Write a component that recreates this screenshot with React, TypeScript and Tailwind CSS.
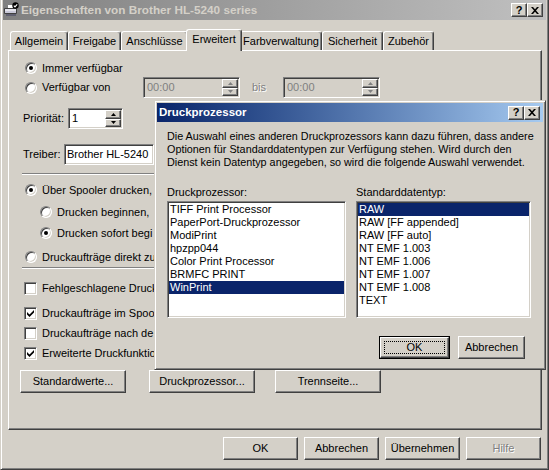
import React from 'react';

const raised =
  'border border-t-white border-l-white border-r-[#404040] border-b-[#404040] shadow-[inset_-1px_-1px_0_#808080]';
const sunken =
  'border border-t-[#808080] border-l-[#808080] border-r-white border-b-white shadow-[inset_1px_1px_0_#404040,inset_-1px_-1px_0_#d4d0c8]';
const frame =
  'border border-t-[#d4d0c8] border-l-[#d4d0c8] border-r-[#404040] border-b-[#404040] shadow-[inset_1px_1px_0_white,inset_-1px_-1px_0_#808080]';
const greyText = 'text-[#808080] [text-shadow:1px_1px_0_white]';

function PrinterIcon() {
  return (
    <svg width="16" height="16" viewBox="0 0 16 16" className="shrink-0">
      <path d="M4.5 2.5h6v4h-6z" fill="#fff" stroke="#808080" />
      <path d="M1.5 6.5h12v5h-12z" fill="#c8c8d8" stroke="#404040" />
      <path d="M2 8h11" stroke="#fff" />
      <path d="M3 12h10v2H3z" fill="#606070" />
      <circle cx="12.5" cy="3.5" r="3.2" fill="#000" />
      <path d="M10.8 3.6l1.2 1.3 2.2-2.6" stroke="#fff" strokeWidth="1.1" fill="none" />
    </svg>
  );
}

function CaptionButtons() {
  return (
    <div className="flex">
      <div className={`w-[16px] h-[14px] bg-[#d4d0c8] ${raised} flex items-center justify-center font-bold text-[11px] leading-none text-black`}>
        ?
      </div>
      <div className={`w-[16px] h-[14px] bg-[#d4d0c8] ${raised} flex items-center justify-center`}>
        <svg width="8" height="7" viewBox="0 0 8 7">
          <path d="M0 0h2l2 2.3L6 0h2L5 3.5 8 7H6L4 4.7 2 7H0l3-3.5z" fill="#000" />
        </svg>
      </div>
    </div>
  );
}

function Radio({ checked }: { checked?: boolean }) {
  return (
    <span className="w-[12px] h-[12px] shrink-0 rounded-full bg-white border border-t-[#808080] border-l-[#808080] border-r-white border-b-white shadow-[inset_1px_1px_0_#404040,inset_-1px_-1px_0_#d4d0c8] flex items-center justify-center">
      {checked && <span className="w-[4px] h-[4px] rounded-full bg-black" />}
    </span>
  );
}

function Check({ checked }: { checked?: boolean }) {
  return (
    <span className={`w-[13px] h-[13px] shrink-0 bg-white ${sunken} flex items-center justify-center`}>
      {checked && (
        <svg width="7" height="7" viewBox="0 0 7 7">
          <path d="M0 2l2.5 2.5L7 0v2.5L2.5 7 0 4.5z" fill="#000" />
        </svg>
      )}
    </span>
  );
}

function Arrow({ up, color }: { up?: boolean; color: string }) {
  return (
    <svg width="5" height="3" viewBox="0 0 5 3">
      <path d={up ? 'M2.5 0L5 3H0z' : 'M0 0h5L2.5 3z'} fill={color} />
    </svg>
  );
}

function SpinField({ value, w, disabled }: { value: string; w: string; disabled?: boolean }) {
  const color = disabled ? '#808080' : '#000';
  return (
    <div className={`${w} h-[21px] shrink-0 ${sunken} ${disabled ? 'bg-[#d4d0c8]' : 'bg-white'} flex p-[1px]`}>
      <div className={`flex-1 flex items-center pl-[2px] ${disabled ? 'text-[#808080]' : ''}`}>{value}</div>
      <div className="w-[16px] flex flex-col">
        <div className={`flex-1 bg-[#d4d0c8] ${raised} flex items-center justify-center`}>
          <Arrow up color={color} />
        </div>
        <div className={`flex-1 bg-[#d4d0c8] ${raised} flex items-center justify-center`}>
          <Arrow color={color} />
        </div>
      </div>
    </div>
  );
}

function Button({ label, w, disabled }: { label: string; w: string; disabled?: boolean }) {
  return (
    <div className={`${w} h-[23px] bg-[#d4d0c8] ${raised} flex items-center justify-center ${disabled ? greyText : ''}`}>
      {label}
    </div>
  );
}

function Separator() {
  return <div className="ml-[13px] w-[505px] h-[2px] border-t border-t-[#808080] border-b border-b-white" />;
}

const tabs = [
  { label: 'Allgemein', w: 'w-[58px]' },
  { label: 'Freigabe', w: 'w-[53px]' },
  { label: 'Anschlüsse', w: 'w-[67px]' },
  { label: 'Erweitert', w: 'w-[56px]', active: true },
  { label: 'Farbverwaltung', w: 'w-[82px]' },
  { label: 'Sicherheit', w: 'w-[61px]' },
  { label: 'Zubehör', w: 'w-[51px]' },
];

// only the part left of the Druckprozessor dialog is visible
const spoolOptions = [
  { label: 'Über Spooler drucken,', indent: 'pl-[16px]', mt: 'mt-[7px]', checked: true },
  { label: 'Drucken beginnen,', indent: 'pl-[31px]', mt: 'mt-[6px]' },
  { label: 'Drucken sofort begi', indent: 'pl-[31px]', mt: 'mt-[5px]', checked: true },
  { label: 'Druckaufträge direkt zu', indent: 'pl-[16px]', mt: 'mt-[8px]' },
];
const checkOptions = [
  { label: 'Fehlgeschlagene Druck', mt: 'mt-[11px]' },
  { label: 'Druckaufträge im Spool', mt: 'mt-[9px]', checked: true },
  { label: 'Druckaufträge nach de', mt: 'mt-[4px]' },
  { label: 'Erweiterte Druckfunktio', mt: 'mt-[4px]', checked: true },
];

const processors = [
  'TIFF Print Processor',
  'PaperPort-Druckprozessor',
  'ModiPrint',
  'hpzpp044',
  'Color Print Processor',
  'BRMFC PRINT',
  'WinPrint',
];
const dataTypes = [
  'RAW',
  'RAW [FF appended]',
  'RAW [FF auto]',
  'NT EMF 1.003',
  'NT EMF 1.006',
  'NT EMF 1.007',
  'NT EMF 1.008',
  'TEXT',
];

function ListBox({ items, selected, w }: { items: string[]; selected: string; w: string }) {
  return (
    <div className={`${w} h-[117px] bg-white ${sunken} p-[1px] overflow-hidden`}>
      {items.map(item => (
        <div
          key={item}
          className={`h-[13px] leading-[13px] pl-[1px] whitespace-nowrap ${item === selected ? 'bg-[#0a246a] text-white' : ''}`}
        >
          {item}
        </div>
      ))}
    </div>
  );
}

function ProcessorDialog() {
  return (
    <div className={`absolute left-[153px] top-[100px] w-[392px] h-[270px] bg-[#d4d0c8] ${frame} p-[2px] flex flex-col`}>
      <div className="h-[19px] bg-linear-to-r from-[#0a246a] to-[#a6caf0] flex items-center justify-between pl-[2px] pr-[3px]">
        <span className="text-white font-bold text-[11.5px]">Druckprozessor</span>
        <CaptionButtons />
      </div>
      <div className="pl-[10px] mt-[8px] leading-[13px] text-[10.8px] whitespace-nowrap">
        Die Auswahl eines anderen Druckprozessors kann dazu führen, dass andere
        <br />
        Optionen für Standarddatentypen zur Verfügung stehen. Wird durch den
        <br />
        Dienst kein Datentyp angegeben, so wird die folgende Auswahl verwendet.
      </div>
      <div className="flex pl-[10px] mt-[17px] gap-[10px]">
        <div className="flex flex-col gap-[2px]">
          <span className="leading-[13px]">Druckprozessor:</span>
          <ListBox items={processors} selected="WinPrint" w="w-[179px]" />
        </div>
        <div className="flex flex-col gap-[2px]">
          <span className="leading-[13px]">Standarddatentyp:</span>
          <ListBox items={dataTypes} selected="RAW" w="w-[175px]" />
        </div>
      </div>
      <div className="flex justify-end gap-[8px] mt-[18px] pr-[18px]">
        <div className="relative w-[71px] h-[23px] border border-black">
          <div className={`h-full bg-[#d4d0c8] ${raised} flex items-center justify-center`}>OK</div>
          <div className="absolute inset-[4px] border border-dotted border-black" />
        </div>
        <Button label="Abbrechen" w="w-[67px]" />
      </div>
    </div>
  );
}

export default function App() {
  return (
    <div className="font-['Liberation_Sans',Arial,sans-serif] text-[11px] text-black w-[549px] h-[470px] relative overflow-hidden bg-[#d4d0c8] border border-t-0 border-l-[#d4d0c8] border-r-[#404040] border-b-[#404040] shadow-[inset_1px_0_0_white,inset_-1px_-1px_0_#808080] px-[2px] flex flex-col">
      <div className="h-[20px] bg-linear-to-r from-[#808080] to-[#c0c0c0] flex items-center justify-between pr-[3px]">
        <div className="flex items-center gap-[2px]">
          <PrinterIcon />
          <span className="text-[#d4d0c8] font-bold text-[11.75px]">Eigenschaften von Brother HL-5240 series</span>
        </div>
        <CaptionButtons />
      </div>

      <div className="ml-[5px] mt-[9px] w-[534px] flex flex-col">
        <div className="h-[21px] flex items-end pl-[2px]">
          {tabs.map(t => (
            <div
              key={t.label}
              className={`${t.w} ${
                t.active ? 'h-[22px] relative top-[1px] z-10 -mx-[2px] pb-[3px]' : 'h-[19px]'
              } bg-[#d4d0c8] border border-b-0 border-t-white border-l-white border-r-[#404040] rounded-t-[3px] shadow-[inset_-1px_0_0_#808080] flex items-center justify-center whitespace-nowrap`}
            >
              {t.label}
            </div>
          ))}
        </div>

        <div className={`h-[380px] bg-[#d4d0c8] ${raised} flex flex-col`}>
          <div className="mt-[9px] h-[16px] flex items-center gap-[5px] pl-[16px]">
            <Radio checked />
            <span>Immer verfügbar</span>
          </div>
          <div className="mt-[1px] h-[21px] flex items-center pl-[16px]">
            <Radio />
            <span className="w-[101px] ml-[5px]">Verfügbar von</span>
            <SpinField value="00:00" w="w-[97px]" disabled />
            <span className={`w-[31px] ml-[12px] ${greyText}`}>bis</span>
            <SpinField value="00:00" w="w-[97px]" disabled />
          </div>
          <div className="mt-[10px] h-[21px] flex items-center pl-[14px]">
            <span className="w-[45px]">Priorität:</span>
            <SpinField value="1" w="w-[55px]" />
          </div>
          <div className="mt-[15px] h-[21px] flex items-center pl-[14px]">
            <span className="w-[41px]">Treiber:</span>
            <div className={`w-[90px] h-[21px] bg-white ${sunken} flex items-center pl-[2px] whitespace-nowrap`}>
              Brother HL-5240
            </div>
          </div>
          <div className="mt-[8px]">
            <Separator />
          </div>
          {spoolOptions.map(o => (
            <div key={o.label} className={`${o.mt} h-[16px] flex items-center gap-[5px] ${o.indent} whitespace-nowrap`}>
              <Radio checked={o.checked} />
              <span>{o.label}</span>
            </div>
          ))}
          <div className="mt-[2px]">
            <Separator />
          </div>
          {checkOptions.map(o => (
            <div key={o.label} className={`${o.mt} h-[16px] flex items-center gap-[5px] pl-[15px] whitespace-nowrap`}>
              <Check checked={o.checked} />
              <span>{o.label}</span>
            </div>
          ))}
          <div className="mt-[9px] flex pl-[11px]">
            <Button label="Standardwerte..." w="w-[106px]" />
            <div className="ml-[23px]">
              <Button label="Druckprozessor..." w="w-[106px]" />
            </div>
            <div className="ml-[20px]">
              <Button label="Trennseite..." w="w-[106px]" />
            </div>
          </div>
        </div>
      </div>

      <div className="mt-[7px] ml-[220px] flex gap-[6px]">
        <Button label="OK" w="w-[75px]" />
        <Button label="Abbrechen" w="w-[75px]" />
        <Button label="Übernehmen" w="w-[75px]" />
        <Button label="Hilfe" w="w-[75px]" disabled />
      </div>

      <ProcessorDialog />
    </div>
  );
}
